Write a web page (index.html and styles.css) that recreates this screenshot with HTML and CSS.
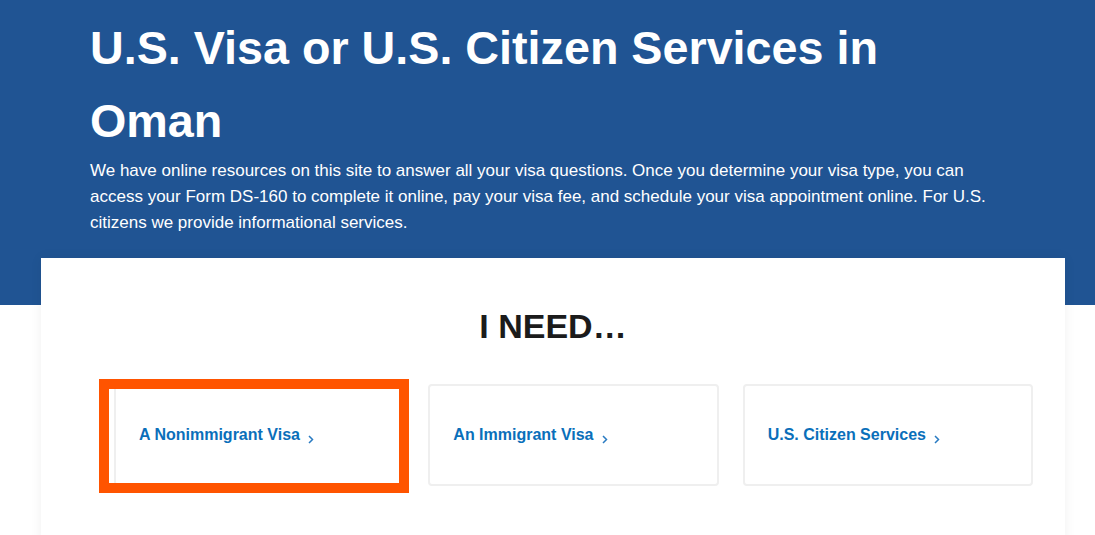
FILE: index.html
```html
<!DOCTYPE html>
<html lang="en">
<head>
<meta charset="UTF-8" />
<meta name="viewport" content="width=device-width, initial-scale=1" />
<title>U.S. Visa or U.S. Citizen Services in Oman</title>
<link rel="stylesheet" href="styles.css">
</head>
<body>
  <div class="page">
    <header class="hero">
      <h1>U.S. Visa or U.S. Citizen Services in Oman</h1>
      <p>We have online resources on this site to answer all your visa questions. Once you determine your visa type, you can access your Form DS-160 to complete it online, pay your visa fee, and schedule your visa appointment online. For U.S. citizens we provide informational services.</p>
    </header>

    <main class="panel">
      <h2>I NEED…</h2>
      <div class="choices">
        <a class="choice selected" href="#">
          <span>A Nonimmigrant Visa</span>
          <svg class="chev" width="6" height="9" viewBox="0 0 6 9"><polyline points="1,1 4.5,4.5 1,8" /></svg>
          <!-- highlight frame from the screenshot -->
          <i class="marker"></i>
        </a>
        <a class="choice" href="#">
          <span>An Immigrant Visa</span>
          <svg class="chev" width="6" height="9" viewBox="0 0 6 9"><polyline points="1,1 4.5,4.5 1,8" /></svg>
        </a>
        <a class="choice" href="#">
          <span>U.S. Citizen Services</span>
          <svg class="chev" width="6" height="9" viewBox="0 0 6 9"><polyline points="1,1 4.5,4.5 1,8" /></svg>
        </a>
      </div>
    </main>
  </div>
</body>
</html>
```

FILE: styles.css
```css
body {
  margin: 0;
  font-family: "Liberation Sans", Arial, sans-serif;
  color: #1b1b1b;
  background: #fff;
  overflow: hidden;
}
.page {
  background: linear-gradient(to bottom, #205493 0, #205493 305px, #fff 305px);
  min-height: 100vh;
}
.hero {
  padding: 12px 90px 22px;
  color: #fff;
}
.hero h1 {
  margin: 0;
  font-size: 46.7px;
  line-height: 73px;
  font-weight: 700;
}
.hero p {
  margin: 0;
  font-size: 17px;
  line-height: 26px;
}
.panel {
  margin-left: 41px;
  width: 1024px;
  background: #fff;
  box-shadow: 0 0 12px rgba(0,0,0,0.06);
  padding: 48px 0 60px;
}
.panel h2 {
  margin: 0 0 38px;
  text-align: center;
  font-size: 34px;
  line-height: 40px;
  font-weight: 700;
  color: #1b1b1b;
}
.choices {
  display: grid;
  grid-template-columns: repeat(3, 1fr);
  gap: 24px;
  padding: 0 32px 0 73px;
}
.choice {
  position: relative;
  display: flex;
  align-items: center;
  height: 102px;
  box-sizing: border-box;
  padding: 0 0 0 23px;
  border: 2px solid #efefef;
  border-radius: 4px;
  color: #0a6fba;
  font-size: 16px;
  font-weight: 700;
  text-decoration: none;
}
.chev {
  margin: 9px 0 0 8px;
  fill: none;
  stroke: #2a7bc2;
  stroke-width: 1.5;
}
.marker {
  position: absolute;
  top: -7px;
  left: -17px;
  width: 290px;
  height: 94px;
  border: 10px solid #ff5400;
}
```
